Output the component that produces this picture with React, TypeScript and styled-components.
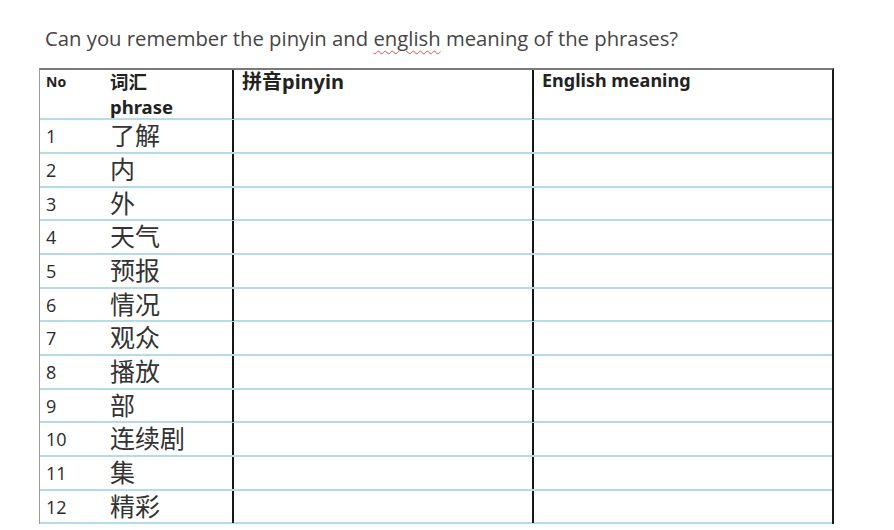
import React from "react";
import styled, { createGlobalStyle } from "styled-components";

const Global = createGlobalStyle`
  html, body { margin: 0; padding: 0; background: #fff; }
  body { width: 894px; height: 530px; overflow: hidden; }
`;

const Page = styled.div`
  padding: 23px 0 0 39px;
  box-sizing: border-box;
  width: 894px;
  height: 530px;
  background: #fff;
`;

const Title = styled.h1`
  margin: 0 0 0 6px;
  font-family: "Open Sans", "Liberation Sans", sans-serif;
  font-weight: 400;
  font-size: 20.3px;
  line-height: 30px;
  color: #454545;
  height: 45px;
  white-space: nowrap;
`;

const Squiggle = styled.span`
  text-decoration: underline wavy #d9534f;
  text-decoration-thickness: 1px;
  text-underline-offset: 4px;
`;

const Table = styled.div`
  width: 795px;
  border-top: 2px solid #7a7a7a;
  border-left: 1px solid #9a9a9a;
  border-right: 2px solid #1a1a1a;
  box-sizing: border-box;
`;

const Row = styled.div<{ $h: number }>`
  display: grid;
  grid-template-columns: 64px 128px 300px 1fr;
  height: ${(p) => p.$h}px;
  border-bottom: 2px solid #b5dbe9;
  box-sizing: border-box;
`;

const Cell = styled.div<{ $line?: boolean }>`
  box-sizing: border-box;
  border-left: ${(p) => (p.$line ? "2px solid #161616" : "none")};
  padding-left: ${(p) => (p.$line ? 8 : 6)}px;
  min-width: 0;
`;

const HeadText = styled.div<{ $size: number; $top: number }>`
  font-family: "Noto Sans", "Noto Sans CJK SC", sans-serif;
  font-weight: 700;
  font-size: ${(p) => p.$size}px;
  line-height: 25px;
  color: #222;
  margin-top: ${(p) => p.$top}px;
  white-space: nowrap;
`;

const Num = styled.div`
  font-family: "Open Sans", "Liberation Sans", sans-serif;
  font-size: 18px;
  line-height: 32px;
  color: #2a2a2a;
`;

const Phrase = styled.div`
  font-family: "Liberation Sans", "Noto Sans CJK SC", sans-serif;
  font-weight: 400;
  font-size: 25px;
  line-height: 32px;
  color: #333;
  white-space: nowrap;
`;

const rows = [
  "了解",
  "内",
  "外",
  "天气",
  "预报",
  "情况",
  "观众",
  "播放",
  "部",
  "连续剧",
  "集",
  "精彩",
];

export default function App() {
  return (
    <Page>
      <Global />
      <Title>
        Can you remember the pinyin and <Squiggle>english</Squiggle> meaning of the phrases?
      </Title>
      <Table>
        <Row $h={50}>
          <Cell>
            <HeadText $size={14} $top={-1}>No</HeadText>
          </Cell>
          <Cell>
            <HeadText $size={18.5} $top={-1}>
              词汇
              <br />
              phrase
            </HeadText>
          </Cell>
          <Cell $line>
            <HeadText $size={20} $top={-1}>拼音pinyin</HeadText>
          </Cell>
          <Cell $line>
            <HeadText $size={18} $top={-2}>English meaning</HeadText>
          </Cell>
        </Row>
        {rows.map((p, i) => (
          <Row key={i} $h={i % 3 === 2 ? 33 : 34}>
            <Cell>
              <Num>{i + 1}</Num>
            </Cell>
            <Cell>
              <Phrase>{p}</Phrase>
            </Cell>
            <Cell $line />
            <Cell $line />
          </Row>
        ))}
      </Table>
    </Page>
  );
}
